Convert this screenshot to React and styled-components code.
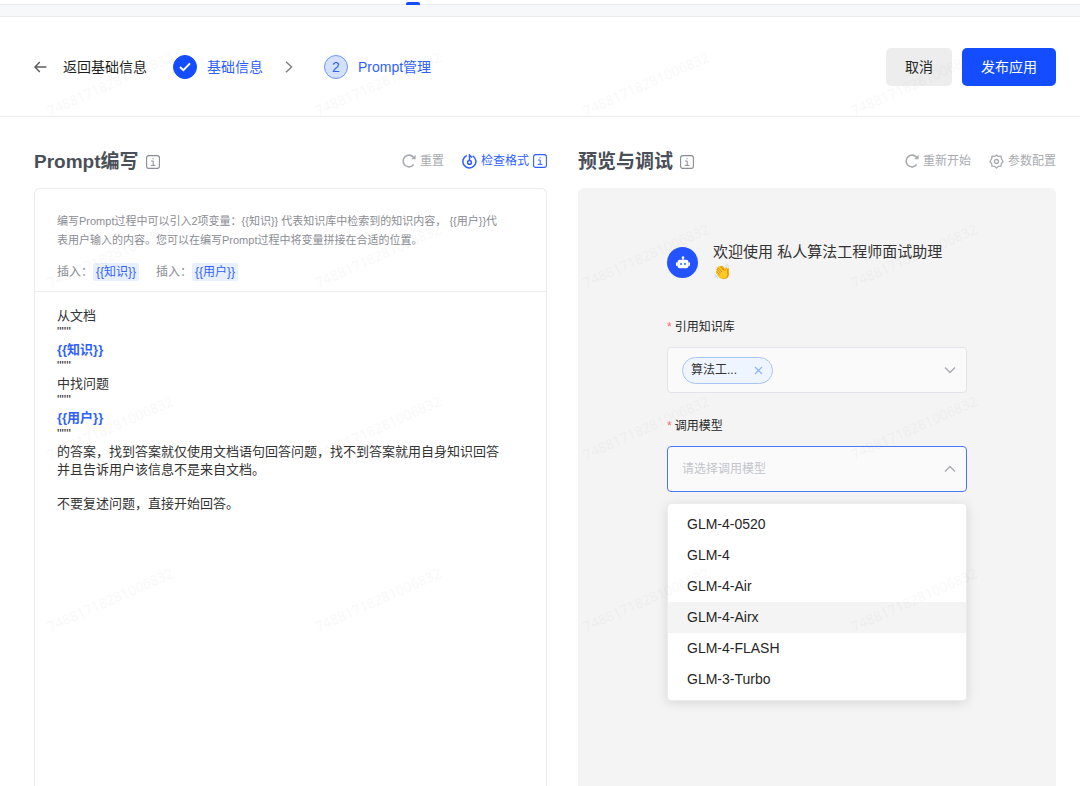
import React, { useState } from 'react'
import styled, { createGlobalStyle, css, ThemeProvider } from 'styled-components'

const theme = {
    colors: {
        primary: '#134dff',
        link: '#2f5fff',
        text: '#333333',
        heading: '#4b4f58',
        muted: '#8b8d94',
        disabled: '#a9abb0',
        line: '#ebebeb',
        panel: '#f4f4f4'
    },
    sizes: { textSM: '11px', textMD: '12px', editor: '13px', textLG: '14px', greeting: '15px', title: '19px' }
}

const MODELS = ['GLM-4-0520', 'GLM-4', 'GLM-4-Air', 'GLM-4-Airx', 'GLM-4-FLASH', 'GLM-3-Turbo']
const WATERMARK = '74881718281006832'

const GlobalStyle = createGlobalStyle`
  * {
    box-sizing: border-box;
  }

  body {
    margin: 0;
    background: #fff;
    color: #333;
    font-family: "Liberation Sans", "Noto Sans CJK SC", sans-serif;
  }

  button, select {
    font-family: inherit;
  }

  svg {
    display: block;
    flex: none;
  }
`

function BackIcon() {
    return (
        <svg width="13" height="12" viewBox="0 0 13 12" fill="none" stroke="#5c5c5c" strokeWidth="1.4">
            <path d="M12.4 6H1M5.8 1.1L1 6l4.8 4.9"/>
        </svg>
    )
}

function CheckIcon() {
    return (
        <svg width="12" height="10" viewBox="0 0 12 10" fill="none" stroke="#fff" strokeWidth="2">
            <path d="M1 5l3.4 3.2L11 1.4"/>
        </svg>
    )
}

function StepArrow() {
    return (
        <svg width="8" height="12" viewBox="0 0 8 12" fill="none" stroke="#7d7d7d" strokeWidth="1.4">
            <path d="M1 .8L6.6 6 1 11.2"/>
        </svg>
    )
}

function InfoIcon() {
    return (
        <svg width="14" height="14" viewBox="0 0 14 14" fill="none" stroke="currentColor">
            <rect x=".6" y=".6" width="12.8" height="12.8" rx="2.2" strokeWidth="1.1"/>
            <path d="M5.2 6h2v4.4M4.8 10.4h4.6M6.5 3.8h1.2" strokeWidth="1"/>
        </svg>
    )
}

function ReloadIcon() {
    return (
        <svg width="14" height="14" viewBox="0 0 14 14" fill="none" stroke="currentColor" strokeWidth="1.6">
            <path d="M11.7 10.6A5.9 5.9 0 1 1 11.8 3.5"/>
            <path d="M13.6 .8v4.4H9.2z" fill="currentColor" stroke="none"/>
        </svg>
    )
}

function CheckFormatIcon() {
    return (
        <svg width="15" height="15" viewBox="0 0 15 15" fill="none" stroke="currentColor" strokeWidth="1.5">
            <path d="M4.8 1.5A6.5 6.5 0 1 0 10.6 1.8"/>
            <circle cx="7.5" cy="8.4" r="1.9"/>
            <path d="M7.5 6.6V1l2.4 2.6"/>
        </svg>
    )
}

function GearIcon() {
    return (
        <svg width="15" height="15" viewBox="0 0 15 15" fill="none" stroke="currentColor" strokeWidth="1.3" strokeLinejoin="round">
            <path d="M7.5 .9L9.3 2.4 12 2.2l.4 2.7L14.1 7.5l-1.7 2-.4 2.7-2.7.1L7.5 14.1l-1.8-1.7L3 12.2l-.4-2.7L.9 7.5l1.7-2.6L3 2.2l2.7.2z"/>
            <circle cx="7.5" cy="7.5" r="2"/>
        </svg>
    )
}

function RobotIcon() {
    return (
        <svg width="16" height="13" viewBox="0 0 16 13" fill="#fff">
            <circle cx="8" cy="1.5" r="1.3"/>
            <path d="M7.4 2h1.2v2H7.4z"/>
            <rect x="2.6" y="3.7" width="10.8" height="8.6" rx="2"/>
            <rect x="1" y="6.2" width="1.8" height="3.8" rx=".8"/>
            <rect x="13.2" y="6.2" width="1.8" height="3.8" rx=".8"/>
            <circle cx="6" cy="8" r=".9" fill="#2354ff"/>
            <circle cx="10" cy="8" r=".9" fill="#2354ff"/>
        </svg>
    )
}

function CloseIcon() {
    return (
        <svg width="9" height="9" viewBox="0 0 9 9" fill="none" stroke="#93b0f8" strokeWidth="1.2">
            <path d="M1 1l7 7M8 1L1 8"/>
        </svg>
    )
}

function CaretIcon({ up = false }) {
    return (
        <svg width="12" height="8" viewBox="0 0 12 8" fill="none" stroke="#a8abb2" strokeWidth="1.4">
            <path d={up ? 'M1 6.5L6 1.5l5 5' : 'M1 1.5l5 5 5-5'}/>
        </svg>
    )
}

function App() {
    const [open, setOpen] = useState(true)
    const [model, setModel] = useState('')
    const [active, setActive] = useState('GLM-4-Airx')

    const toggleMenu = (event) => {
        event.preventDefault()
        setOpen(!open)
    }

    const pickModel = (name) => {
        setModel(name)
        setOpen(false)
    }

    return (
        <ThemeProvider theme={theme}>
            <GlobalStyle/>
            <Page>
                <TopNav>
                    <ActiveTab/>
                </TopNav>
                <Strip/>
                <Header>
                    <BackButton type="button">
                        <BackIcon/>
                        返回基础信息
                    </BackButton>
                    <Step>
                        <StepMark $done><CheckIcon/></StepMark>
                        基础信息
                    </Step>
                    <StepArrow/>
                    <Step $last>
                        <StepMark>2</StepMark>
                        Prompt管理
                    </Step>
                    <Actions>
                        <Button type="button">取消</Button>
                        <Button type="button" $primary>发布应用</Button>
                    </Actions>
                </Header>
                <Main>
                    <Column>
                        <ColumnHead>
                            <Title>Prompt编写</Title>
                            <InfoIcon/>
                            <Tools>
                                <ToolButton type="button"><ReloadIcon/>重置</ToolButton>
                                <ToolButton type="button" $primary><CheckFormatIcon/>检查格式<InfoIcon/></ToolButton>
                            </Tools>
                        </ColumnHead>
                        <EditorPanel>
                            <Hint>
                                <HintText>
                                    编写Prompt过程中可以引入2项变量：{'{{知识}}'} 代表知识库中检索到的知识内容， {'{{用户}}'}代表用户输入的内容。您可以在编写Prompt过程中将变量拼接在合适的位置。
                                </HintText>
                                <InsertRow>
                                    <Insert>插入：<VariableButton type="button">{'{{知识}}'}</VariableButton></Insert>
                                    <Insert>插入：<VariableButton type="button">{'{{用户}}'}</VariableButton></Insert>
                                </InsertRow>
                            </Hint>
                            <Editor role="textbox" aria-multiline="true" aria-label="Prompt编写" contentEditable suppressContentEditableWarning>
                                <Line>从文档</Line>
                                <Quotes>"""</Quotes>
                                <Line><Variable>{'{{知识}}'}</Variable></Line>
                                <Quotes>"""</Quotes>
                                <Line>中找问题</Line>
                                <Quotes>"""</Quotes>
                                <Line><Variable>{'{{用户}}'}</Variable></Line>
                                <Quotes>"""</Quotes>
                                <Line>的答案，找到答案就仅使用文档语句回答问题，找不到答案就用自身知识回答并且告诉用户该信息不是来自文档。</Line>
                                <Quotes><br/></Quotes>
                                <Line>不要复述问题，直接开始回答。</Line>
                            </Editor>
                        </EditorPanel>
                    </Column>
                    <Column>
                        <ColumnHead>
                            <Title>预览与调试</Title>
                            <InfoIcon/>
                            <Tools>
                                <ToolButton type="button"><ReloadIcon/>重新开始</ToolButton>
                                <ToolButton type="button"><GearIcon/>参数配置</ToolButton>
                            </Tools>
                        </ColumnHead>
                        <PreviewPanel>
                            <Form>
                                <Greeting>
                                    <Avatar><RobotIcon/></Avatar>
                                    <GreetingText>欢迎使用 私人算法工程师面试助理👏</GreetingText>
                                </Greeting>
                                <Field>
                                    <Label htmlFor="knowledge">引用知识库</Label>
                                    <SelectBox>
                                        <Tag>
                                            算法工...
                                            <TagClose type="button" aria-label="移除"><CloseIcon/></TagClose>
                                        </Tag>
                                        <Select id="knowledge" defaultValue="">
                                            <option value=""></option>
                                        </Select>
                                        <CaretIcon/>
                                    </SelectBox>
                                </Field>
                                <Field>
                                    <Label htmlFor="model">调用模型</Label>
                                    <SelectBox $focused={open}>
                                        <Select id="model" value={model} onMouseDown={toggleMenu} onChange={(e) => setModel(e.target.value)}>
                                            <option value="">请选择调用模型</option>
                                            {MODELS.map((name) => <option key={name}>{name}</option>)}
                                        </Select>
                                        <CaretIcon up={open}/>
                                    </SelectBox>
                                    {open && (
                                        <Menu role="listbox" aria-label="调用模型">
                                            {MODELS.map((name) => (
                                                <MenuItem
                                                    key={name}
                                                    role="option"
                                                    aria-selected={name === model}
                                                    $active={name === active}
                                                    onMouseEnter={() => setActive(name)}
                                                    onClick={() => pickModel(name)}
                                                >
                                                    {name}
                                                </MenuItem>
                                            ))}
                                        </Menu>
                                    )}
                                </Field>
                            </Form>
                        </PreviewPanel>
                    </Column>
                </Main>
                <Watermark aria-hidden="true">
                    {Array.from({ length: 16 }, (_, i) => <Mark key={i}>{WATERMARK}</Mark>)}
                </Watermark>
            </Page>
        </ThemeProvider>
    )
}

const Page = styled.div`
  position: relative;
  display: flex;
  flex-direction: column;
  min-height: 100vh;
  overflow: hidden;
`

const TopNav = styled.nav`
  display: flex;
  align-items: flex-end;
  height: 5px;
  padding-left: 406px;
  border-bottom: 1px solid #e9eaec;
`

const ActiveTab = styled.span`
  width: 14px;
  height: 3px;
  margin-bottom: -1px;
  border-radius: 2px 2px 0 0;
  background: ${({ theme }) => theme.colors.primary};
`

const Strip = styled.div`
  height: 12px;
  border-bottom: 1px solid ${({ theme }) => theme.colors.line};
  background: #f6f8fa;
`

const Header = styled.header`
  display: flex;
  align-items: center;
  height: 100px;
  padding: 0 24px 0 34px;
  border-bottom: 1px solid ${({ theme }) => theme.colors.line};
`

const BackButton = styled.button`
  display: flex;
  align-items: center;
  gap: 16px;
  margin-right: 26px;
  padding: 0;
  border: 0;
  background: none;
  color: #1f1f1f;
  font-size: ${({ theme }) => theme.sizes.textLG};
  line-height: 20px;
`

const Step = styled.div`
  display: flex;
  align-items: center;
  gap: 10px;
  margin: ${({ $last }) => $last ? '0 0 0 31px' : '0 22px 0 0'};
  color: ${({ theme }) => theme.colors.link};
  font-size: ${({ theme }) => theme.sizes.textLG};
  line-height: 20px;
`

const StepMark = styled.span`
  display: flex;
  align-items: center;
  justify-content: center;
  width: 24px;
  height: 24px;
  border: 1px solid #6d93ff;
  border-radius: 50%;
  background: #d3e1fd;
  ${({ $done, theme }) => $done && css`
    border-color: ${theme.colors.primary};
    background: ${theme.colors.primary};
  `}
`

const Actions = styled.div`
  display: flex;
  gap: 10px;
  margin-left: auto;
`

const Button = styled.button`
  height: 38px;
  padding: 0 19px;
  border: 0;
  border-radius: 5px;
  background: ${({ $primary, theme }) => $primary ? theme.colors.primary : '#ededed'};
  color: ${({ $primary }) => $primary ? '#fff' : '#262626'};
  font-size: ${({ theme }) => theme.sizes.textLG};
  line-height: 20px;
`

const Main = styled.main`
  display: grid;
  grid-template-columns: 513fr 478fr;
  gap: 31px;
  flex: 1;
  padding: 29px 24px 0 34px;
`

const Column = styled.section`
  display: flex;
  flex-direction: column;
  min-width: 0;
`

const ColumnHead = styled.div`
  display: flex;
  align-items: center;
  gap: 7px;
  height: 32px;
  margin-bottom: 10px;
  color: ${({ theme }) => theme.colors.muted};
`

const Title = styled.h2`
  margin: 0;
  color: ${({ theme }) => theme.colors.heading};
  font-size: ${({ theme }) => theme.sizes.title};
  line-height: 32px;
`

const Tools = styled.div`
  display: flex;
  gap: 18px;
  margin-left: auto;
`

const ToolButton = styled.button`
  display: flex;
  align-items: center;
  gap: 4px;
  padding: 0 0 2px;
  border: 0;
  background: none;
  color: ${({ $primary, theme }) => $primary ? theme.colors.link : theme.colors.disabled};
  font-size: ${({ theme }) => theme.sizes.textMD};
  line-height: 18px;
`

const EditorPanel = styled.div`
  flex: 1;
  border: 1px solid ${({ theme }) => theme.colors.line};
  border-bottom: 0;
  border-radius: 6px 6px 0 0;
`

const Hint = styled.div`
  padding: 23px 44px 10px 22px;
  border-bottom: 1px solid ${({ theme }) => theme.colors.line};
  color: ${({ theme }) => theme.colors.muted};
`

const HintText = styled.p`
  margin: 0 0 13px;
  font-size: ${({ theme }) => theme.sizes.textSM};
  line-height: 19px;
`

const InsertRow = styled.div`
  display: flex;
  gap: 17px;
`

const Insert = styled.span`
  display: flex;
  font-size: ${({ theme }) => theme.sizes.textMD};
  line-height: 18px;
`

const VariableButton = styled.button`
  height: 18px;
  padding: 0 3px;
  border: 0;
  border-radius: 2px;
  background: #e8f0ff;
  color: ${({ theme }) => theme.colors.link};
  font-size: ${({ theme }) => theme.sizes.textMD};
  line-height: 18px;
`

const Editor = styled.div`
  padding: 15px 44px 15px 22px;
  color: ${({ theme }) => theme.colors.text};
  font-size: ${({ theme }) => theme.sizes.editor};
  outline: none;
`

const Line = styled.p`
  margin: 0;
  line-height: 18px;
`

const Quotes = styled(Line)`
  padding-bottom: 2px;
  line-height: 14px;
`

const Variable = styled.b`
  color: ${({ theme }) => theme.colors.link};
`

const PreviewPanel = styled.div`
  flex: 1;
  padding: 54px 24px 0;
  border-radius: 6px 6px 0 0;
  background: ${({ theme }) => theme.colors.panel};
`

const Form = styled.form`
  max-width: 300px;
  margin: 0 auto;
`

const Greeting = styled.div`
  display: flex;
  align-items: center;
  gap: 15px;
  margin-bottom: 36px;
`

const Avatar = styled.span`
  display: flex;
  flex: none;
  align-items: center;
  justify-content: center;
  width: 31px;
  height: 31px;
  border-radius: 50%;
  background: #2354ff;
`

const GreetingText = styled.p`
  max-width: 240px;
  margin: 0;
  font-size: ${({ theme }) => theme.sizes.greeting};
  line-height: 20px;
`

const Field = styled.div`
  position: relative;
  margin-bottom: 24px;
`

const Label = styled.label`
  display: block;
  margin-bottom: 11px;
  color: #262626;
  font-size: ${({ theme }) => theme.sizes.textMD};
  line-height: 18px;

  &::before {
    content: '*';
    margin-right: 3px;
    color: #f56c6c;
  }
`

const SelectBox = styled.div`
  display: flex;
  align-items: center;
  height: 46px;
  padding: 0 10px 0 14px;
  border: 1px solid ${({ $focused }) => $focused ? '#4a76ff' : '#e3e4e9'};
  border-radius: 4px;
  background: #fafafa;
`

const Select = styled.select`
  flex: 1;
  min-width: 0;
  height: 44px;
  padding: 0;
  border: 0;
  outline: none;
  appearance: none;
  background: none;
  color: ${({ value, theme }) => value ? theme.colors.text : '#c3c5cb'};
  font-size: ${({ theme }) => theme.sizes.textMD};
`

const Tag = styled.span`
  display: flex;
  align-items: center;
  justify-content: space-between;
  width: 91px;
  height: 27px;
  padding: 0 9px 0 8px;
  border: 1px solid #a9c4fb;
  border-radius: 14px;
  background: #eff5ff;
  font-size: ${({ theme }) => theme.sizes.textMD};
  line-height: 24px;
`

const TagClose = styled.button`
  padding: 0;
  border: 0;
  background: none;
`

const Menu = styled.ul`
  position: absolute;
  top: 100%;
  left: 0;
  right: 0;
  margin: 11px 0 0;
  padding: 5px 0;
  border: 1px solid #ececee;
  border-radius: 4px;
  background: #fff;
  box-shadow: 0 2px 12px rgba(0, 0, 0, 0.12);
  list-style: none;
`

const MenuItem = styled.li`
  padding: 0 19px;
  background: ${({ $active }) => $active ? '#f4f4f4' : 'transparent'};
  color: #262626;
  font-size: ${({ theme }) => theme.sizes.textLG};
  line-height: 31px;
  cursor: pointer;
`

const Watermark = styled.div`
  position: absolute;
  inset: -3px 0 0 -24px;
  display: grid;
  grid-template-columns: repeat(4, 268px);
  grid-auto-rows: 172px;
  overflow: hidden;
  pointer-events: none;
`

const Mark = styled.span`
  place-self: center;
  transform: rotate(-24deg);
  will-change: transform;
  color: rgba(0, 0, 0, 0.035);
  font-family: "Open Sans", sans-serif;
  font-size: ${({ theme }) => theme.sizes.textLG};
`

export default App
